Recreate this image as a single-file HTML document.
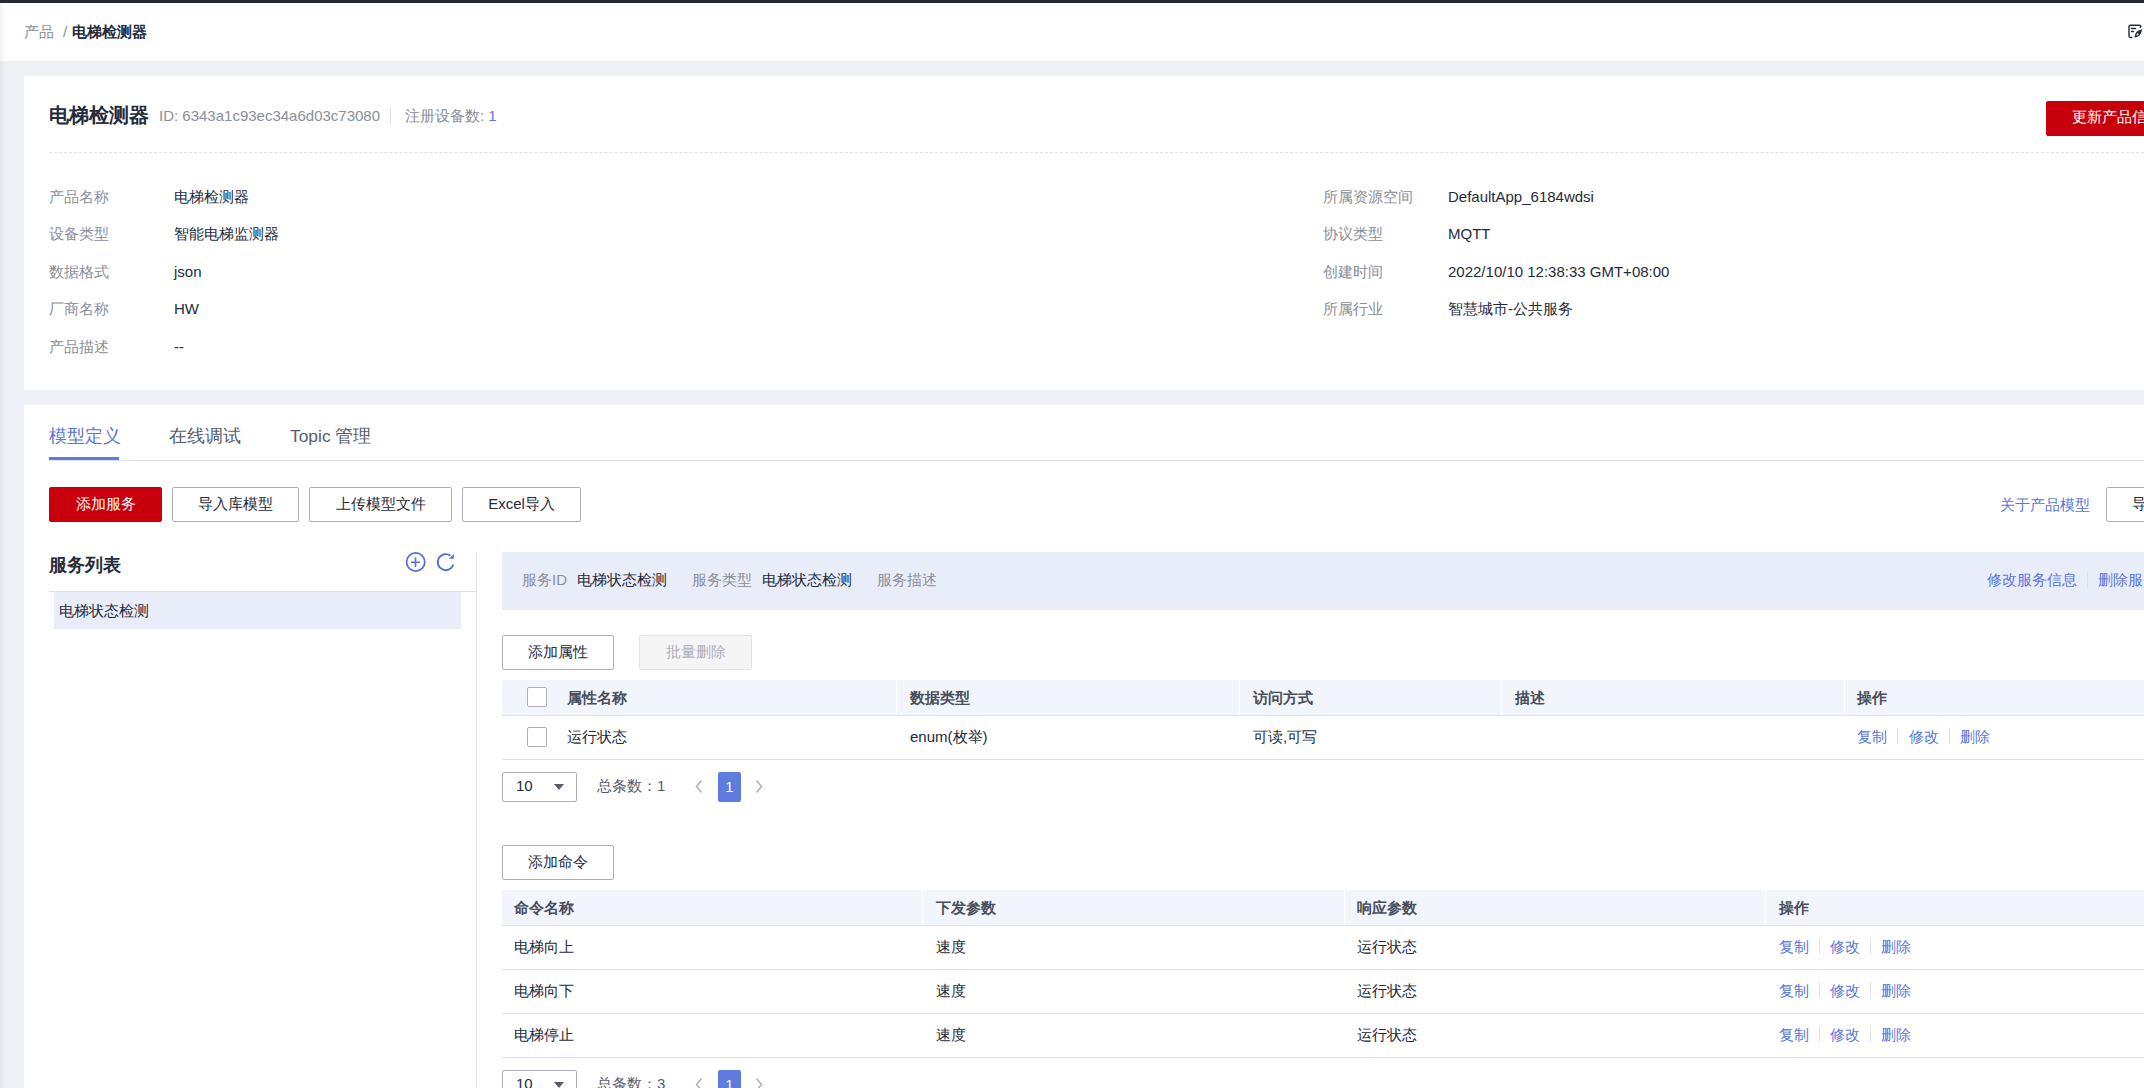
<!DOCTYPE html>
<html><head><meta charset="utf-8">
<style>
*{box-sizing:border-box;margin:0;padding:0}
html,body{width:2144px;height:1088px;overflow:hidden;background:#eef0f5;font-family:"Liberation Sans",sans-serif;font-size:15px;color:#252b3a}
.a{position:absolute;white-space:nowrap}
.t{position:absolute;white-space:nowrap;line-height:20px;height:20px}
#topbar{left:0;top:0;width:2144px;height:3px;background:#252a33}
#crumb{left:0;top:3px;width:2144px;height:58px;background:#fff}
#lshadow{left:0;top:3px;width:5px;height:1085px;background:linear-gradient(to right,rgba(0,0,0,.05),rgba(0,0,0,0))}
.card{position:absolute;background:#fff}
.lbl{color:#8a8e99}
.blue{color:#5a76dc}
.btn{position:absolute;height:35px;border:1px solid #adb0b8;border-radius:2px;background:#fff;text-align:center;line-height:31px;font-size:15px;color:#252b3a}
.btn.red{background:#c7000b;border-color:#c7000b;color:#fff}
.btn.dis{background:#f5f5f6;border-color:#e2e3e8;color:#adb0b8}
.hline{position:absolute;height:1px;background:#dfe1e6}
.vline{position:absolute;width:1px;background:#dfe1e6}
.th{position:absolute;background:#f2f5fc}
.b{font-weight:bold}
.th-t{color:#484e5b}
.cb{position:absolute;width:20px;height:20px;border:1px solid #adb0b8;border-radius:2px;background:#fff}
.sep{position:absolute;width:1px;height:16px;background:#dfe1e6}
</style></head>
<body>
<div id="topbar" class="a"></div>
<div id="crumb" class="a"></div>

<!-- breadcrumb -->
<div class="t lbl" style="left:24px;top:22px">产品</div>
<div class="t lbl" style="left:63px;top:22px">/</div>
<div class="t b" style="left:72px;top:22px">电梯检测器</div>
<svg class="a" style="left:2110px;top:15px" width="34" height="32" viewBox="0 0 34 32">
  <path d="M30.4 12.3L30.9 11.4Q30.6 10.3 29.5 10.3H20.4Q19 10.3 19 11.7V21.1Q19 22.5 20.4 22.5H21.8" fill="none" stroke="#252b3a" stroke-width="1.4" stroke-linecap="round" stroke-linejoin="round"/>
  <path d="M21.5 13.5H25.6M21.5 16.5H23.5" stroke="#252b3a" stroke-width="1.4" stroke-linecap="round"/>
  <path d="M24.4 22.6C25 19.5 25.8 17.6 27 16.6C28.5 15.4 30.2 14.8 32.2 14.3C31.6 16.5 31 18.6 29.8 20.2C28.7 21.5 26.8 22.2 24.4 22.6Z" fill="#252b3a"/>
  <path d="M26.2 20.8L27.6 17.8L28.8 19.8Z" fill="#fff"/>
</svg>

<!-- card 1 -->
<div class="card" style="left:24px;top:76px;width:2120px;height:314px"></div>
<div class="t b" style="left:49px;top:102px;font-size:20px;line-height:26px;height:26px">电梯检测器</div>
<div class="t lbl" style="left:159px;top:106px">ID: 6343a1c93ec34a6d03c73080</div>
<div class="vline" style="left:390px;top:108px;height:16px"></div>
<div class="t lbl" style="left:405px;top:106px">注册设备数: <span class="blue">1</span></div>
<div class="btn red" style="left:2046px;top:101px;width:140px;height:35px;line-height:30px;text-align:left;padding-left:25px">更新产品信息</div>
<div class="a" style="left:49px;top:152px;width:2095px;height:1px;border-top:1px dashed #dfe1e6"></div>

<div class="t lbl" style="left:49px;top:187px">产品名称</div>
<div class="t" style="left:174px;top:187px">电梯检测器</div>
<div class="t lbl" style="left:49px;top:224px">设备类型</div>
<div class="t" style="left:174px;top:224px">智能电梯监测器</div>
<div class="t lbl" style="left:49px;top:262px">数据格式</div>
<div class="t" style="left:174px;top:262px">json</div>
<div class="t lbl" style="left:49px;top:299px">厂商名称</div>
<div class="t" style="left:174px;top:299px">HW</div>
<div class="t lbl" style="left:49px;top:337px">产品描述</div>
<div class="t" style="left:174px;top:337px">--</div>

<div class="t lbl" style="left:1323px;top:187px">所属资源空间</div>
<div class="t" style="left:1448px;top:187px">DefaultApp_6184wdsi</div>
<div class="t lbl" style="left:1323px;top:224px">协议类型</div>
<div class="t" style="left:1448px;top:224px">MQTT</div>
<div class="t lbl" style="left:1323px;top:262px">创建时间</div>
<div class="t" style="left:1448px;top:262px">2022/10/10 12:38:33 GMT+08:00</div>
<div class="t lbl" style="left:1323px;top:299px">所属行业</div>
<div class="t" style="left:1448px;top:299px">智慧城市-公共服务</div>

<!-- card 2 -->
<div class="card" style="left:24px;top:405px;width:2120px;height:683px"></div>
<div class="t blue" style="left:49px;top:424px;font-size:18px;line-height:24px;height:24px">模型定义</div>
<div class="t" style="left:169px;top:424px;font-size:18px;line-height:24px;height:24px;color:#575d6c">在线调试</div>
<div class="t" style="left:290px;top:424px;font-size:18px;line-height:24px;height:24px;color:#575d6c"><span style="font-size:17.4px">Topic </span>管理</div>
<div class="hline" style="left:49px;top:460px;width:2095px"></div>
<div class="a" style="left:49px;top:457px;width:70px;height:3px;background:#5e7ce0"></div>

<div class="btn red" style="left:49px;top:487px;width:113px;height:35px;line-height:31px">添加服务</div>
<div class="btn" style="left:172px;top:487px;width:127px;height:35px;line-height:31px">导入库模型</div>
<div class="btn" style="left:309px;top:487px;width:143px;height:35px;line-height:31px">上传模型文件</div>
<div class="btn" style="left:462px;top:487px;width:119px;height:35px;line-height:31px">Excel导入</div>
<div class="t blue" style="left:2000px;top:495px">关于产品模型</div>
<div class="btn" style="left:2106px;top:487px;width:100px;height:35px;line-height:31px;text-align:left;padding-left:25px">导出</div>

<!-- left panel -->
<div class="t b" style="left:49px;top:553px;font-size:18px;line-height:24px;height:24px">服务列表</div>
<svg class="a" style="left:404px;top:551px" width="24" height="24" viewBox="0 0 24 24">
  <circle cx="11.7" cy="11" r="9.1" fill="none" stroke="#5470d8" stroke-width="1.7"/>
  <path d="M7 11.2h9M11.5 6.5v9.4" stroke="#5470d8" stroke-width="1.6"/>
</svg>
<svg class="a" style="left:434px;top:551px" width="24" height="24" viewBox="0 0 24 24">
  <path d="M19.4 13.4A8 8 0 1 1 16.6 4.8" fill="none" stroke="#5470d8" stroke-width="1.9"/>
  <path d="M19.8 3v4.7H15z" fill="#5470d8"/>
</svg>
<div class="hline" style="left:49px;top:591px;width:427px"></div>
<div class="a" style="left:54px;top:592px;width:407px;height:37px;background:#e9edfa"></div>
<div class="t" style="left:59px;top:601px">电梯状态检测</div>
<div class="vline" style="left:476px;top:552px;height:536px"></div>

<!-- info bar -->
<div class="a" style="left:502px;top:552px;width:1642px;height:58px;background:#e9edfa"></div>
<div class="t lbl" style="left:522px;top:570px">服务ID</div>
<div class="t" style="left:577px;top:570px">电梯状态检测</div>
<div class="t lbl" style="left:692px;top:570px">服务类型</div>
<div class="t" style="left:762px;top:570px">电梯状态检测</div>
<div class="t lbl" style="left:877px;top:570px">服务描述</div>
<div class="t blue" style="left:1987px;top:570px">修改服务信息</div>
<div class="sep" style="left:2087px;top:572px"></div>
<div class="t blue" style="left:2098px;top:570px">删除服务</div>

<!-- property table -->
<div class="btn" style="left:502px;top:635px;width:112px">添加属性</div>
<div class="btn dis" style="left:639px;top:635px;width:113px">批量删除</div>
<div class="th" style="left:502px;top:680px;width:1642px;height:35px"></div>
<div class="a" style="left:896px;top:680px;width:1px;height:35px;background:#fff"></div>
<div class="a" style="left:1239px;top:680px;width:1px;height:35px;background:#fff"></div>
<div class="a" style="left:1501px;top:680px;width:1px;height:35px;background:#fff"></div>
<div class="a" style="left:1844px;top:680px;width:1px;height:35px;background:#fff"></div>
<div class="hline" style="left:502px;top:715px;width:1642px"></div>
<div class="cb" style="left:527px;top:687px"></div>
<div class="t b th-t" style="left:567px;top:688px">属性名称</div>
<div class="t b th-t" style="left:910px;top:688px">数据类型</div>
<div class="t b th-t" style="left:1253px;top:688px">访问方式</div>
<div class="t b th-t" style="left:1515px;top:688px">描述</div>
<div class="t b th-t" style="left:1857px;top:688px">操作</div>
<div class="cb" style="left:527px;top:727px"></div>
<div class="t" style="left:567px;top:727px">运行状态</div>
<div class="t" style="left:910px;top:727px">enum(枚举)</div>
<div class="t" style="left:1253px;top:727px">可读,可写</div>
<div class="t blue" style="left:1857px;top:727px">复制</div>
<div class="sep" style="left:1897px;top:728px"></div>
<div class="t blue" style="left:1909px;top:727px">修改</div>
<div class="sep" style="left:1949px;top:728px"></div>
<div class="t blue" style="left:1960px;top:727px">删除</div>
<div class="hline" style="left:502px;top:759px;width:1642px"></div>

<!-- pagination 1 -->
<div class="a" style="left:502px;top:772px;width:75px;height:30px;border:1px solid #adb0b8;border-radius:2px;background:#fff"></div>
<div class="t" style="left:516px;top:776px">10</div>
<svg class="a" style="left:553px;top:783px" width="12" height="8" viewBox="0 0 12 8"><path d="M1 1h10L6 7z" fill="#575d6c"/></svg>
<div class="t" style="left:597px;top:776px;color:#575d6c">总条数：1</div>
<svg class="a" style="left:694px;top:779px" width="10" height="15" viewBox="0 0 10 15"><path d="M7.5 1.5L2.5 7.5l5 6" fill="none" stroke="#adb0b8" stroke-width="1.5"/></svg>
<div class="a" style="left:718px;top:772px;width:23px;height:30px;background:#5e7ce0;border-radius:2px;color:#fff;text-align:center;line-height:30px">1</div>
<svg class="a" style="left:754px;top:779px" width="10" height="15" viewBox="0 0 10 15"><path d="M2.5 1.5l5 6-5 6" fill="none" stroke="#adb0b8" stroke-width="1.5"/></svg>

<!-- command table -->
<div class="btn" style="left:502px;top:845px;width:112px">添加命令</div>
<div class="th" style="left:502px;top:890px;width:1642px;height:35px"></div>
<div class="a" style="left:922px;top:890px;width:1px;height:35px;background:#fff"></div>
<div class="a" style="left:1344px;top:890px;width:1px;height:35px;background:#fff"></div>
<div class="a" style="left:1765px;top:890px;width:1px;height:35px;background:#fff"></div>
<div class="hline" style="left:502px;top:925px;width:1642px"></div>
<div class="t b th-t" style="left:514px;top:898px">命令名称</div>
<div class="t b th-t" style="left:936px;top:898px">下发参数</div>
<div class="t b th-t" style="left:1357px;top:898px">响应参数</div>
<div class="t b th-t" style="left:1779px;top:898px">操作</div>

<div class="t" style="left:514px;top:937px">电梯向上</div>
<div class="t" style="left:936px;top:937px">速度</div>
<div class="t" style="left:1357px;top:937px">运行状态</div>
<div class="t blue" style="left:1779px;top:937px">复制</div>
<div class="sep" style="left:1819px;top:938px"></div>
<div class="t blue" style="left:1830px;top:937px">修改</div>
<div class="sep" style="left:1870px;top:938px"></div>
<div class="t blue" style="left:1881px;top:937px">删除</div>
<div class="hline" style="left:502px;top:969px;width:1642px"></div>

<div class="t" style="left:514px;top:981px">电梯向下</div>
<div class="t" style="left:936px;top:981px">速度</div>
<div class="t" style="left:1357px;top:981px">运行状态</div>
<div class="t blue" style="left:1779px;top:981px">复制</div>
<div class="sep" style="left:1819px;top:982px"></div>
<div class="t blue" style="left:1830px;top:981px">修改</div>
<div class="sep" style="left:1870px;top:982px"></div>
<div class="t blue" style="left:1881px;top:981px">删除</div>
<div class="hline" style="left:502px;top:1013px;width:1642px"></div>

<div class="t" style="left:514px;top:1025px">电梯停止</div>
<div class="t" style="left:936px;top:1025px">速度</div>
<div class="t" style="left:1357px;top:1025px">运行状态</div>
<div class="t blue" style="left:1779px;top:1025px">复制</div>
<div class="sep" style="left:1819px;top:1026px"></div>
<div class="t blue" style="left:1830px;top:1025px">修改</div>
<div class="sep" style="left:1870px;top:1026px"></div>
<div class="t blue" style="left:1881px;top:1025px">删除</div>
<div class="hline" style="left:502px;top:1057px;width:1642px"></div>

<!-- pagination 2 -->
<div class="a" style="left:502px;top:1070px;width:75px;height:30px;border:1px solid #adb0b8;border-radius:2px;background:#fff"></div>
<div class="t" style="left:516px;top:1074px">10</div>
<svg class="a" style="left:553px;top:1081px" width="12" height="8" viewBox="0 0 12 8"><path d="M1 1h10L6 7z" fill="#575d6c"/></svg>
<div class="t" style="left:597px;top:1074px;color:#575d6c">总条数：3</div>
<svg class="a" style="left:694px;top:1077px" width="10" height="15" viewBox="0 0 10 15"><path d="M7.5 1.5L2.5 7.5l5 6" fill="none" stroke="#adb0b8" stroke-width="1.5"/></svg>
<div class="a" style="left:718px;top:1070px;width:23px;height:30px;background:#5e7ce0;border-radius:2px;color:#fff;text-align:center;line-height:30px">1</div>
<svg class="a" style="left:754px;top:1077px" width="10" height="15" viewBox="0 0 10 15"><path d="M2.5 1.5l5 6-5 6" fill="none" stroke="#adb0b8" stroke-width="1.5"/></svg>

<div id="lshadow" class="a"></div>
</body></html>
